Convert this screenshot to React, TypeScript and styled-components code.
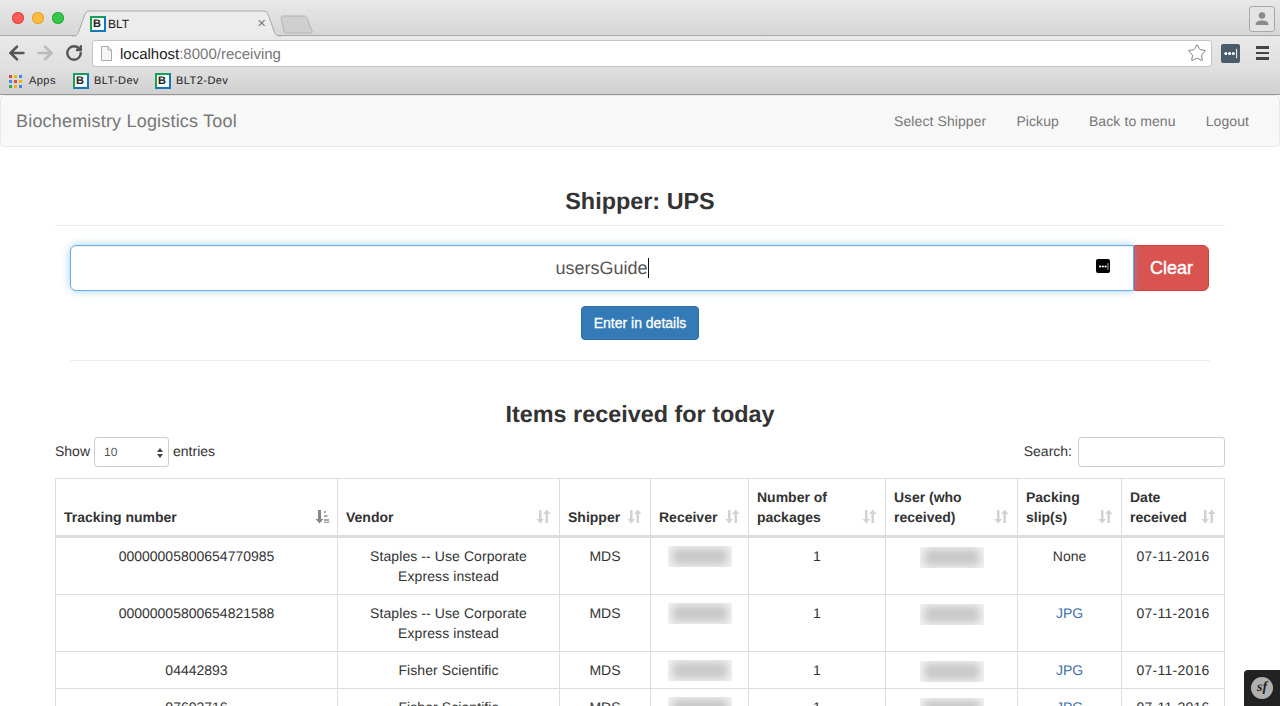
import React from 'react';
import styled, { createGlobalStyle } from 'styled-components';
import { ArrowLeft, ArrowRight, RotateCw, Star } from 'lucide-react';

const GlobalStyle = createGlobalStyle`
  html, body {
    margin: 0;
    padding: 0;
    height: 706px;
    overflow: hidden;
    background: #fff;
    font-family: "Liberation Sans", Arial, sans-serif;
    font-size: 14px;
    line-height: 20px;
    color: #333;
    text-rendering: geometricPrecision;
  }
  * { box-sizing: border-box; }
`;

const Page = styled.div`
  width: 1280px;
  height: 706px;
  overflow: hidden;
`;

const TabStrip = styled.div`
  position: relative;
  height: 36px;
  display: flex;
  align-items: flex-start;
  padding: 12px 5px 0 12px;
  background: linear-gradient(#e9e9e9, #d6d6d6);
  border-bottom: 1px solid #a8a8a8;
`;

const Lights = styled.div`
  display: flex;
  gap: 8px;
  width: 78px;
`;

const Light = styled.span<{ $color: string; $edge: string }>`
  width: 12px;
  height: 12px;
  border-radius: 50%;
  background: ${({ $color }) => $color};
  box-shadow: inset 0 0 0 1px ${({ $edge }) => $edge};
`;

const TabShape = styled.svg`
  position: absolute;
  left: 72px;
  top: 10px;
`;

const Tab = styled.div`
  position: relative;
  display: flex;
  align-items: center;
  width: 176px;
  height: 20px;
  margin-top: 2px;
  font-size: 12px;
  color: #222;
  gap: 2px;
`;

const TabClose = styled.span`
  margin-left: auto;
  font-size: 15px;
  color: #777;
`;

const ProfileButton = styled.div`
  margin-left: auto;
  margin-top: -6px;
  width: 26px;
  height: 26px;
  display: flex;
  align-items: center;
  justify-content: center;
  border: 1px solid #a9a9a9;
  border-radius: 3px;
  background: #e4e4e4;
`;

const Favicon = styled.span`
  flex: none;
  display: inline-flex;
  align-items: flex-end;
  justify-content: flex-start;
  width: 16px;
  height: 16px;
  padding-left: 1px;
  background: #f7fbfb;
  border-style: solid;
  border-width: 2px;
  border-color: #14a05a #1676bb #1676bb #14a05a;
  font-size: 11px;
  line-height: 11px;
  font-weight: 700;
  letter-spacing: 0;
  color: #222;
`;

const Toolbar = styled.div`
  display: flex;
  align-items: center;
  height: 34px;
  padding: 0 8px;
  background: linear-gradient(#e9e9e9, #dfdfdf);
`;

const NavIcons = styled.div`
  display: flex;
  align-items: center;
  gap: 6px;
  width: 86px;
  margin-left: -2px;
`;

const ReloadIcon = styled(RotateCw)`
  margin-left: 3px;
`;

const Omnibox = styled.div`
  display: flex;
  align-items: center;
  width: 1120px;
  height: 27px;
  padding: 0 4px 0 8px;
  background: #fff;
  border: 1px solid #c4c4c4;
  border-radius: 3px;
  font-size: 15px;
  color: #777;
`;

const UrlText = styled.span`
  margin: 3px 0 0 8px;
`;

const UrlHost = styled.span`
  color: #222;
`;

const StarSlot = styled.span`
  margin-left: auto;
  display: flex;
`;

const PassBadge = styled.span`
  display: flex;
  align-items: center;
  justify-content: center;
  width: 19px;
  height: 19px;
  margin-left: 9px;
  border-radius: 2px;
  background: #4a5b6c;
`;

const MenuBars = styled.span`
  display: flex;
  flex-direction: column;
  gap: 3px;
  width: 13px;
  margin-left: 16px;
  span {
    height: 2.5px;
    background: #444;
  }
`;

const Bookmarks = styled.div`
  display: flex;
  align-items: center;
  height: 25px;
  padding: 0 9px 2px;
  background: linear-gradient(#dfdfdf, #d0d0d0);
  border-bottom: 1px solid #969696;
  font-size: 11px;
  letter-spacing: 0.45px;
  color: #222;
`;

const BookmarkItem = styled.span`
  display: flex;
  align-items: center;
  gap: 5px;
  margin-right: 16px;
`;

const AppsItem = styled(BookmarkItem)`
  gap: 7px;
  margin-right: 17px;
`;

const Navbar = styled.nav`
  display: flex;
  align-items: center;
  height: 52px;
  padding: 0 15px;
  background: #f8f8f8;
  border: 1px solid #e7e7e7;
  border-radius: 4px;
  color: #777;
`;

const Brand = styled.span`
  font-size: 18px;
  letter-spacing: 0.19px;
  margin-right: auto;
`;

const NavLink = styled.span`
  padding: 0 15px;
  letter-spacing: 0.09px;
`;

const Main = styled.main`
  padding: 0 55px;
`;

const Title = styled.h3`
  margin: 0;
  padding-top: 41px;
  height: 79px;
  border-bottom: 1px solid #eee;
  font-size: 23.4px;
  line-height: 26px;
  font-weight: 700;
  text-align: center;
`;

const ScanForm = styled.div`
  display: flex;
  margin: 19px 16px 0 15px;
`;

const ScanInput = styled.div`
  position: relative;
  flex: 1;
  height: 46px;
  display: flex;
  align-items: center;
  justify-content: center;
  border: 1px solid #66afe9;
  border-radius: 6px 0 0 6px;
  box-shadow: inset 0 1px 1px rgba(0, 0, 0, 0.075), 0 0 8px rgba(102, 175, 233, 0.6);
  font-size: 18px;
  color: #555;
`;

const Caret = styled.span`
  width: 1px;
  height: 20px;
  background: #111;
`;

const FieldPass = styled.span`
  position: absolute;
  right: 23px;
  top: 13px;
  display: flex;
  align-items: center;
  justify-content: center;
  width: 14px;
  height: 14px;
  border-radius: 2px;
  background: #000;
`;

const ClearButton = styled.button`
  width: 75px;
  height: 46px;
  border: 1px solid #d43f3a;
  border-radius: 0 6px 6px 0;
  background: #d9534f;
  color: #fff;
  font: 18px "Liberation Sans", Arial, sans-serif;
  -webkit-text-stroke: 0.4px #fff;
`;

const DetailsRow = styled.div`
  display: flex;
  justify-content: center;
  margin-top: 15px;
  padding-bottom: 20px;
  margin-left: 15px;
  margin-right: 15px;
  border-bottom: 1px solid #eee;
`;

const PrimaryButton = styled.button`
  width: 118px;
  height: 34px;
  border: 1px solid #2e6da4;
  border-radius: 4px;
  background: #337ab7;
  color: #fff;
  font: 14px "Liberation Sans", Arial, sans-serif;
  -webkit-text-stroke: 0.3px #fff;
`;

const SectionTitle = styled.h3`
  margin: 40px 0 0;
  font-size: 23.4px;
  line-height: 26px;
  font-weight: 700;
  text-align: center;
`;

const TableControls = styled.div`
  display: flex;
  align-items: center;
  justify-content: space-between;
  height: 30px;
  margin-top: 10px;
`;

const ControlLabel = styled.label`
  display: flex;
  align-items: flex-start;
  gap: 4px;
  line-height: 28px;
`;

const LengthSelect = styled.div`
  position: relative;
  width: 75px;
  height: 30px;
  display: flex;
  align-items: center;
  padding-left: 9px;
  border: 1px solid #ccc;
  border-radius: 3px;
  font-size: 12px;
  color: #555;
`;

const SelectArrows = styled.svg`
  position: absolute;
  right: 4px;
  top: 9px;
`;

const SearchBox = styled.input`
  width: 147px;
  height: 30px;
  margin-left: 2px;
  border: 1px solid #ccc;
  border-radius: 3px;
`;

const DataTable = styled.table`
  width: 1169px;
  margin-top: 11px;
  border-collapse: collapse;
  table-layout: fixed;
`;

const HeadCell = styled.th<{ $width: number }>`
  position: relative;
  width: ${({ $width }) => $width}px;
  padding: 8px 26px 8px 8px;
  border: 1px solid #ddd;
  border-bottom: 3px solid #ddd;
  vertical-align: bottom;
  text-align: left;
  font-weight: 700;
  line-height: 20px;
`;

const SortIcon = styled.svg<{ $active?: boolean }>`
  position: absolute;
  right: ${({ $active }) => ($active ? 7 : 8)}px;
  bottom: 11px;
`;

const Cell = styled.td`
  padding: 8px;
  border: 1px solid #ddd;
  vertical-align: top;
  text-align: center;
  line-height: 20px;
`;

const VendorCell = styled(Cell)`
  letter-spacing: 0.08px;
`;

const DateCell = styled(Cell)`
  letter-spacing: 0.25px;
`;

const BlurFrame = styled.span<{ $drop?: boolean }>`
  display: block;
  width: 64px;
  height: 21px;
  margin: ${({ $drop }) => ($drop ? '1px auto -2px' : '0 auto -1px')};
  overflow: hidden;
  background: #f5f5f5;
`;

const BlurFill = styled.span`
  display: block;
  width: 56px;
  height: 17px;
  margin: 2px 4px;
  background: #c6c6c6;
  filter: blur(5px);
`;

const SlipLink = styled.a`
  color: #3f6fa8;
`;

const DebugBadge = styled.div`
  position: fixed;
  right: 0;
  bottom: 0;
  width: 36px;
  height: 36px;
  display: flex;
  align-items: center;
  justify-content: center;
  border-top-left-radius: 4px;
  background: #222;
`;

const DebugLogo = styled.span`
  width: 22px;
  height: 22px;
  border-radius: 50%;
  background: #b0b0b0;
  color: #222;
  font: italic 700 14px/21px "Liberation Serif", serif;
  text-align: center;
`;

const columns = [
  { label: 'Tracking number', width: 282, active: true },
  { label: 'Vendor', width: 222 },
  { label: 'Shipper', width: 91 },
  { label: 'Receiver', width: 98 },
  { label: 'Number of packages', width: 137 },
  { label: 'User (who received)', width: 132 },
  { label: 'Packing slip(s)', width: 104 },
  { label: 'Date received', width: 103 },
];

const rows = [
  { tracking: '00000005800654770985', vendor: 'Staples -- Use Corporate Express instead', slip: 'None' },
  { tracking: '00000005800654821588', vendor: 'Staples -- Use Corporate Express instead', slip: 'JPG' },
  { tracking: '04442893', vendor: 'Fisher Scientific', slip: 'JPG' },
  { tracking: '07603716', vendor: 'Fisher Scientific', slip: 'JPG' },
];

const Blurred = ({ drop }: { drop?: boolean }) => (
  <BlurFrame $drop={drop}>
    <BlurFill />
  </BlurFrame>
);

const PassDots = ({ size }: { size: number }) => (
  <svg width={size} height={size} viewBox="0 0 16 16">
    <circle cx="3" cy="8" r="1.6" fill="#fff" />
    <circle cx="7" cy="8" r="1.6" fill="#fff" />
    <circle cx="11" cy="8" r="1.6" fill="#fff" />
    <rect x="14" y="3" width="1" height="10" fill="#fff" />
  </svg>
);

const SortGlyph = ({ active }: { active?: boolean }) =>
  active ? (
    <SortIcon $active width="15" height="15" viewBox="0 0 15 15">
      <path d="M3 1h3v9h2.500L4.500 14.500.5 10H3z" fill="#888" />
      <path d="M9 2h2v2H9zM9 6h3.500v2H9zM9 10h5v2H9zM9 12.500h5.500v1.500H9z" fill="#aaa" />
    </SortIcon>
  ) : (
    <SortIcon width="15" height="15" viewBox="0 0 15 15">
      <path d="M3 1h2.500v9H8l-3.750 4.500L.5 10H3z" fill="#d2d2d2" />
      <path d="M9.500 14h2.500V5h2.500L10.750.5 7 5h2.500z" fill="#d2d2d2" />
    </SortIcon>
  );

const AppsGrid = () => {
  const colors = ['#e8453c', '#f4b400', '#4285f4', '#4285f4', '#e8453c', '#f4b400', '#34a853', '#f4b400', '#4285f4'];
  return (
    <svg width="13" height="13" viewBox="0 0 13 13">
      {colors.map((color, i) => (
        <rect key={i} x={(i % 3) * 5} y={Math.floor(i / 3) * 5} width="3" height="3" fill={color} />
      ))}
    </svg>
  );
};

export default function App() {
  return (
    <Page>
      <GlobalStyle />
      <TabStrip>
        <Lights>
          <Light $color="#fc5b57" $edge="#e5453f" />
          <Light $color="#fdbc40" $edge="#e2a02c" />
          <Light $color="#34c84a" $edge="#2aaa3a" />
        </Lights>
        <TabShape width="250" height="27" viewBox="0 0 250 27">
          <path d="M0 26c4 0 6-1 7-5l6-17c1-2 2-3 5-3h173c3 0 4 1 5 3l6 17c1 4 3 5 7 5" fill="#ececec" stroke="#a8a8a8" />
          <path d="M209 8c0-1 1-2 2-2h21c2 0 2 1 3 2l5 13c1 1 0 2-1 2h-25c-1 0-2-1-2-2z" fill="#cfcfcf" stroke="#b4b4b4" />
        </TabShape>
        <Tab>
          <Favicon>B</Favicon>
          BLT
          <TabClose>×</TabClose>
        </Tab>
        <ProfileButton>
          <svg width="16" height="16" viewBox="0 0 16 16">
            <circle cx="8" cy="4.500" r="3.200" fill="#8a8a8a" />
            <path d="M1.500 14c0-3.500 3-4.500 6.500-4.500s6.500 1 6.500 4.500z" fill="#8a8a8a" />
          </svg>
        </ProfileButton>
      </TabStrip>
      <Toolbar>
        <NavIcons>
          <ArrowLeft size={22} strokeWidth={2.8} color="#555" />
          <ArrowRight size={22} strokeWidth={2.8} color="#bbb" />
          <ReloadIcon size={18} strokeWidth={3.2} color="#555" />
        </NavIcons>
        <Omnibox>
          <svg width="11" height="15" viewBox="0 0 11 15">
            <path d="M.5.500h6.500l3.500 3.500v10.500H.5z" fill="#f6f6f6" stroke="#aaa" />
            <path d="M7 .500v3.500h3.500" fill="none" stroke="#aaa" />
          </svg>
          <UrlText>
            <UrlHost>localhost</UrlHost>:8000/receiving
          </UrlText>
          <StarSlot>
            <Star size={20} strokeWidth={1} color="#666" />
          </StarSlot>
        </Omnibox>
        <PassBadge>
          <PassDots size={15} />
        </PassBadge>
        <MenuBars>
          <span />
          <span />
          <span />
        </MenuBars>
      </Toolbar>
      <Bookmarks>
        <AppsItem>
          <AppsGrid />
          Apps
        </AppsItem>
        <BookmarkItem>
          <Favicon>B</Favicon>
          BLT-Dev
        </BookmarkItem>
        <BookmarkItem>
          <Favicon>B</Favicon>
          BLT2-Dev
        </BookmarkItem>
      </Bookmarks>
      <Navbar>
        <Brand>Biochemistry Logistics Tool</Brand>
        <NavLink>Select Shipper</NavLink>
        <NavLink>Pickup</NavLink>
        <NavLink>Back to menu</NavLink>
        <NavLink>Logout</NavLink>
      </Navbar>
      <Main>
        <Title>Shipper: UPS</Title>
        <ScanForm>
          <ScanInput>
            usersGuide
            <Caret />
            <FieldPass>
              <PassDots size={11} />
            </FieldPass>
          </ScanInput>
          <ClearButton>Clear</ClearButton>
        </ScanForm>
        <DetailsRow>
          <PrimaryButton>Enter in details</PrimaryButton>
        </DetailsRow>
        <SectionTitle>Items received for today</SectionTitle>
        <TableControls>
          <ControlLabel>
            Show
            <LengthSelect>
              10
              <SelectArrows width="8" height="12" viewBox="0 0 8 12">
                <path d="M4 1l3 4H1zM4 11L1 7h6z" fill="#444" />
              </SelectArrows>
            </LengthSelect>
            entries
          </ControlLabel>
          <ControlLabel>
            Search:
            <SearchBox />
          </ControlLabel>
        </TableControls>
        <DataTable>
          <thead>
            <tr>
              {columns.map((col) => (
                <HeadCell key={col.label} $width={col.width}>
                  {col.label}
                  <SortGlyph active={col.active} />
                </HeadCell>
              ))}
            </tr>
          </thead>
          <tbody>
            {rows.map((row) => (
              <tr key={row.tracking}>
                <Cell>{row.tracking}</Cell>
                <VendorCell>{row.vendor}</VendorCell>
                <Cell>MDS</Cell>
                <Cell>
                  <Blurred />
                </Cell>
                <Cell>1</Cell>
                <Cell>
                  <Blurred drop />
                </Cell>
                <Cell>{row.slip === 'JPG' ? <SlipLink>JPG</SlipLink> : row.slip}</Cell>
                <DateCell>07-11-2016</DateCell>
              </tr>
            ))}
          </tbody>
        </DataTable>
      </Main>
      <DebugBadge>
        <DebugLogo>sf</DebugLogo>
      </DebugBadge>
    </Page>
  );
}
